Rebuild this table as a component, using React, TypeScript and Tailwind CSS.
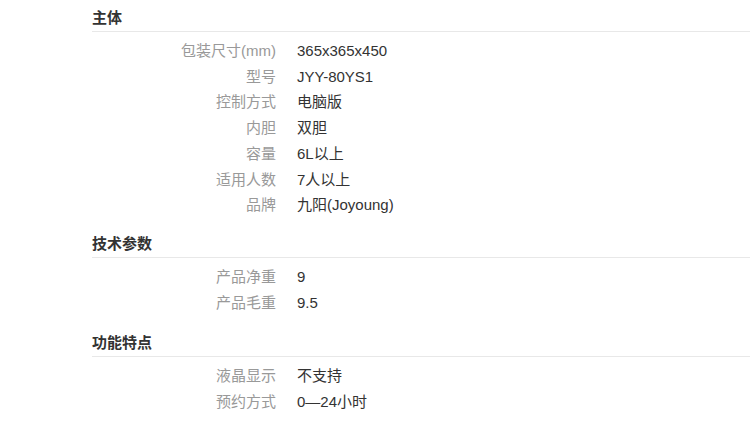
import React from "react";

type Row = { label: string; value: string };
type Section = { title: string; rows: Row[]; gap: string };

const sections: Section[] = [
  {
    title: "主体",
    gap: "",
    rows: [
      { label: "包装尺寸(mm)", value: "365x365x450" },
      { label: "型号", value: "JYY-80YS1" },
      { label: "控制方式", value: "电脑版" },
      { label: "内胆", value: "双胆" },
      { label: "容量", value: "6L以上" },
      { label: "适用人数", value: "7人以上" },
      { label: "品牌", value: "九阳(Joyoung)" },
    ],
  },
  {
    title: "技术参数",
    gap: "mt-[13px]",
    rows: [
      { label: "产品净重", value: "9" },
      { label: "产品毛重", value: "9.5" },
    ],
  },
  {
    title: "功能特点",
    gap: "mt-[15px]",
    rows: [
      { label: "液晶显示", value: "不支持" },
      { label: "预约方式", value: "0—24小时" },
    ],
  },
];

const App = () => {
  return (
    <div
      className="min-h-[428px] w-[750px] bg-white pl-[92px] pt-[5px]"
      style={{ fontFamily: '"Liberation Sans", "Noto Sans CJK SC", sans-serif' }}
    >
      {sections.map((s) => (
        <div key={s.title} className={s.gap}>
          <div className="border-b border-[#e8e8e8] text-[15px] font-bold leading-[26px] text-[#333]">
            {s.title}
          </div>
          <div className="pt-[6px]">
            {s.rows.map((r) => (
              <div key={r.label} className="flex text-[15px] leading-[25.7px]">
                <div className="w-[184px] text-right text-[#999]">{r.label}</div>
                <div className="ml-[21px] text-[#333]">{r.value}</div>
              </div>
            ))}
          </div>
        </div>
      ))}
    </div>
  );
};

export default App;
